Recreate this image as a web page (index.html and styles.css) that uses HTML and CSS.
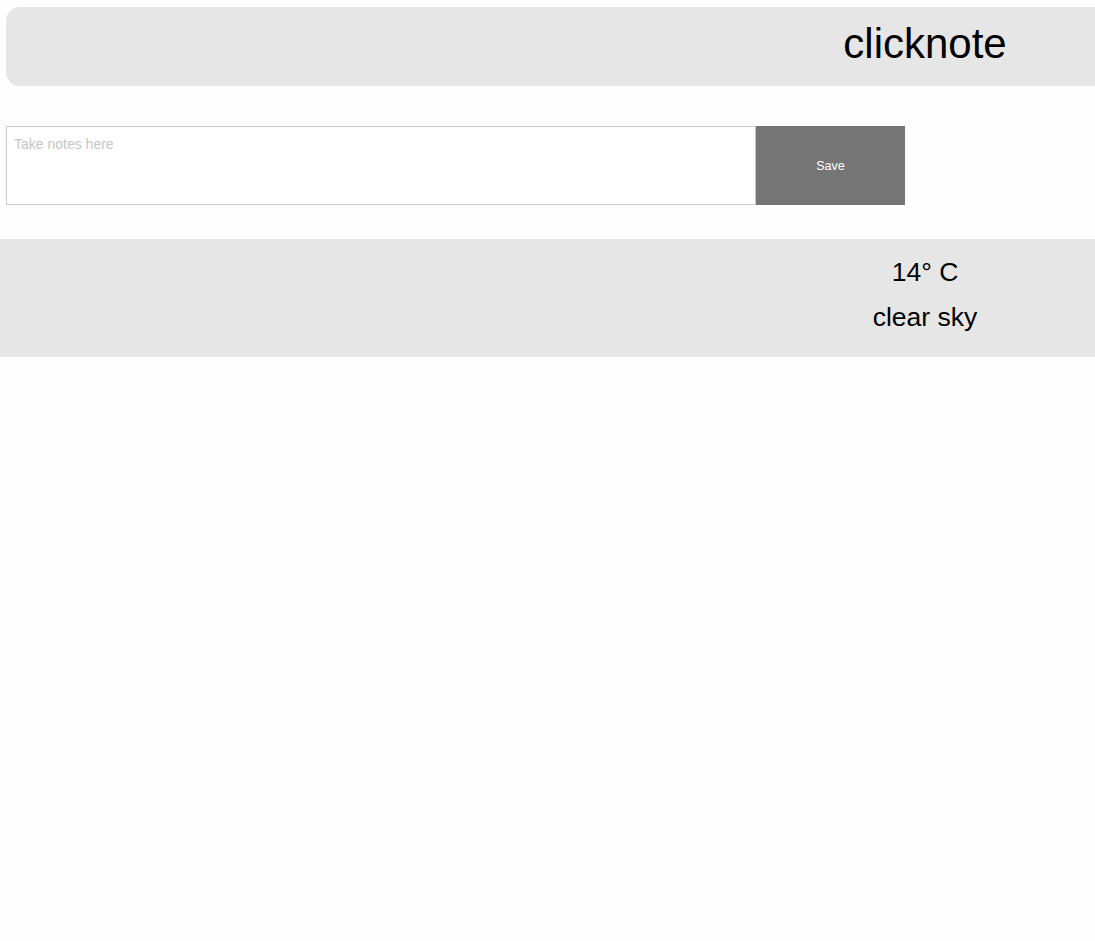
FILE: index.html
```html
<!DOCTYPE html>
<html>
<head>
<meta charset="utf-8">
<link rel="stylesheet" href="styles.css">
</head>
<body>
<header class="topbar">
  <h1 class="brand">clicknote</h1>
</header>
<form class="note-form">
  <textarea class="note-input" placeholder="Take notes here"></textarea>
  <button type="button" class="save-btn">Save</button>
</form>
<section class="weather">
  <div class="weather-info">
    <p class="temp">14° C</p>
    <p class="desc">clear sky</p>
  </div>
</section>
</body>
</html>
```

FILE: styles.css
```css
html, body {
  margin: 0;
  padding: 0;
  background: #fefefe;
  font-family: "Liberation Sans", Arial, sans-serif;
  color: #000;
}

.topbar {
  margin: 7px 0 0 6px;
  height: 79px;
  background: #e6e6e6;
  border-radius: 14px 0 0 14px;
  display: flex;
  justify-content: flex-end;
  align-items: center;
}

.brand {
  margin: 0;
  width: 340px;
  text-align: center;
  font-weight: normal;
  font-size: 42px;
  line-height: 1;
  position: relative;
  top: -3px;
}

.note-form {
  margin: 40px 0 0 6px;
  display: flex;
  height: 79px;
}

.note-input {
  box-sizing: border-box;
  width: 750px;
  height: 79px;
  border: 1px solid #cbcbcb;
  border-radius: 0;
  padding: 9px 7px;
  margin: 0;
  resize: none;
  font-family: "Liberation Sans", Arial, sans-serif;
  font-size: 14px;
  background: #fff;
  outline: none;
}

.note-input::placeholder {
  color: #c6c6c6;
}

.save-btn {
  width: 149px;
  height: 79px;
  border: none;
  margin: 0;
  background: #757575;
  color: #fff;
  font-family: "Liberation Sans", Arial, sans-serif;
  font-size: 12.5px;
  padding: 0;
}

.weather {
  margin-top: 34px;
  height: 118px;
  background: #e6e6e6;
  display: flex;
  justify-content: flex-end;
}

.weather-info {
  width: 340px;
  text-align: center;
  font-size: 26.5px;
  padding-top: 18px;
}

.weather-info p {
  margin: 0;
  line-height: 30px;
}

.weather-info .desc {
  margin-top: 15px;
}
```
